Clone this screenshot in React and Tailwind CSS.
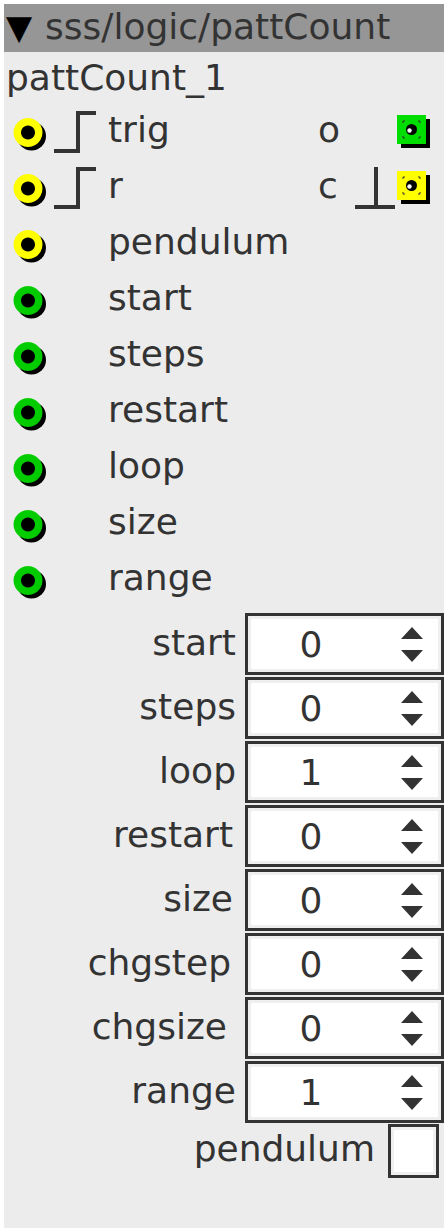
import React from 'react';

const FONT = { fontFamily: '"DejaVu Sans", "Liberation Sans", sans-serif' };

const Inlet = ({ color }) => (
  <svg width="40" height="40" viewBox="0 0 40 40" className="shrink-0">
    <circle cx="21.5" cy="24" r="14.5" fill="#000" />
    <path
      d="M18 6a14.5 14.5 0 1 0 0.01 0ZM18 13.5a7 7 0 1 1 -0.01 0Z"
      fill={color}
      fillRule="evenodd"
    />
  </svg>
);

const Rise = () => (
  <svg width="50" height="46" viewBox="0 0 50 46" className="shrink-0">
    <path d="M4 42H28V4H46" fill="none" stroke="#333" strokeWidth="4" />
  </svg>
);

const Fall = () => (
  <svg width="41" height="46" viewBox="0 0 41 46" className="shrink-0">
    <path d="M21 2V42M0 42H40" fill="none" stroke="#333" strokeWidth="4" />
  </svg>
);

const Outlet = ({ color }) => (
  <svg width="36" height="36" viewBox="0 0 36 36" className="shrink-0">
    <rect x="5" y="5" width="29" height="29" fill="#000" />
    <rect x="1" y="1" width="29" height="29" fill={color} />
    <path d="M7 9V7H9M22 7H24V9M24 22V24H22M9 24H7V22" fill="none" stroke="#333" strokeWidth="1" />
    <circle cx="15.5" cy="15.5" r="5.5" fill="#000" />
    <circle cx="13.5" cy="16.5" r="2.2" fill="#fff" />
  </svg>
);

const inlets = [
  { name: 'trig', color: '#ffff00', edge: true, out: { name: 'o', color: '#00dd00' } },
  { name: 'r', color: '#ffff00', edge: true, out: { name: 'c', color: '#ffff00', fall: true } },
  { name: 'pendulum', color: '#ffff00' },
  { name: 'start', color: '#00cc00' },
  { name: 'steps', color: '#00cc00' },
  { name: 'restart', color: '#00cc00' },
  { name: 'loop', color: '#00cc00' },
  { name: 'size', color: '#00cc00' },
  { name: 'range', color: '#00cc00' },
];

const params = [
  ['start', 0, 'pr-[9px]'],
  ['steps', 0, 'pr-[9px]'],
  ['loop', 1, 'pr-[9px]'],
  ['restart', 0, 'pr-[12px]'],
  ['size', 0, 'pr-[12px]'],
  ['chgstep', 0, 'pr-[14px]'],
  ['chgsize', 0, 'pr-[18px]'],
  ['range', 1, 'pr-[9px]'],
];

const Spinner = () => (
  <svg width="24" height="36" viewBox="0 0 24 36" className="shrink-0">
    <path d="M1 12L12 0L23 12Z" fill="#333" />
    <path d="M1 23L12 35L23 23Z" fill="#333" />
  </svg>
);

export default function App() {
  return (
    <div className="w-[448px] h-[1232px] bg-white p-[4px] text-[#333] text-[36px] leading-none" style={FONT}>
      <div className="h-full bg-[#ececec] flex flex-col">
        <div className="h-[48px] bg-[#969696] flex items-center pl-[2px] pb-[2px] whitespace-pre">
          <span className="text-[34px] w-[39px] text-black">▼</span>sss/logic/pattCount
        </div>
        <div className="h-[52px] flex items-center pl-[2px]">pattCount_1</div>

        {inlets.map((it) => (
          <div key={it.name} className="h-[56px] flex items-center">
            <div className="w-[6px]" />
            <Inlet color={it.color} />
            <div className="w-[50px] flex items-center">{it.edge && <Rise />}</div>
            <div className="w-[8px]" />
            <div className="w-[210px] pb-[4px]">{it.name}</div>
            {it.out && (
              <>
                <div className="w-[37px] pb-[4px]">{it.out.name}</div>
                <div className="w-[41px] flex items-center">{it.out.fall && <Fall />}</div>
                <Outlet color={it.out.color} />
              </>
            )}
          </div>
        ))}

        <div className="mt-[5px] flex flex-col gap-[2px]">
          {params.map(([label, val, pad]) => (
            <div key={label} className="h-[62px] flex items-center">
              <div className={`flex-1 text-right pb-[2px] ${pad}`}>{label}</div>
              <div className="w-[199px] h-full border-[3px] border-[#333] bg-[#efefef] p-[3px]">
                <div className="h-full bg-white flex items-center">
                  <div className="w-[120px] text-center pt-[2px]">{val}</div>
                  <div className="ml-auto pr-[14px] flex items-center pt-[2px]">
                    <Spinner />
                  </div>
                </div>
              </div>
            </div>
          ))}
          <div className="h-[56px] flex items-center justify-end -mt-[2px]">
            <div className="pr-[13px] pb-[4px]">pendulum</div>
            <div className="w-[51px] h-[54px] border-[3px] border-[#333] bg-[#efefef] p-[3px] mr-[5px]">
              <div className="w-full h-full bg-white" />
            </div>
          </div>
        </div>
      </div>
    </div>
  );
}
